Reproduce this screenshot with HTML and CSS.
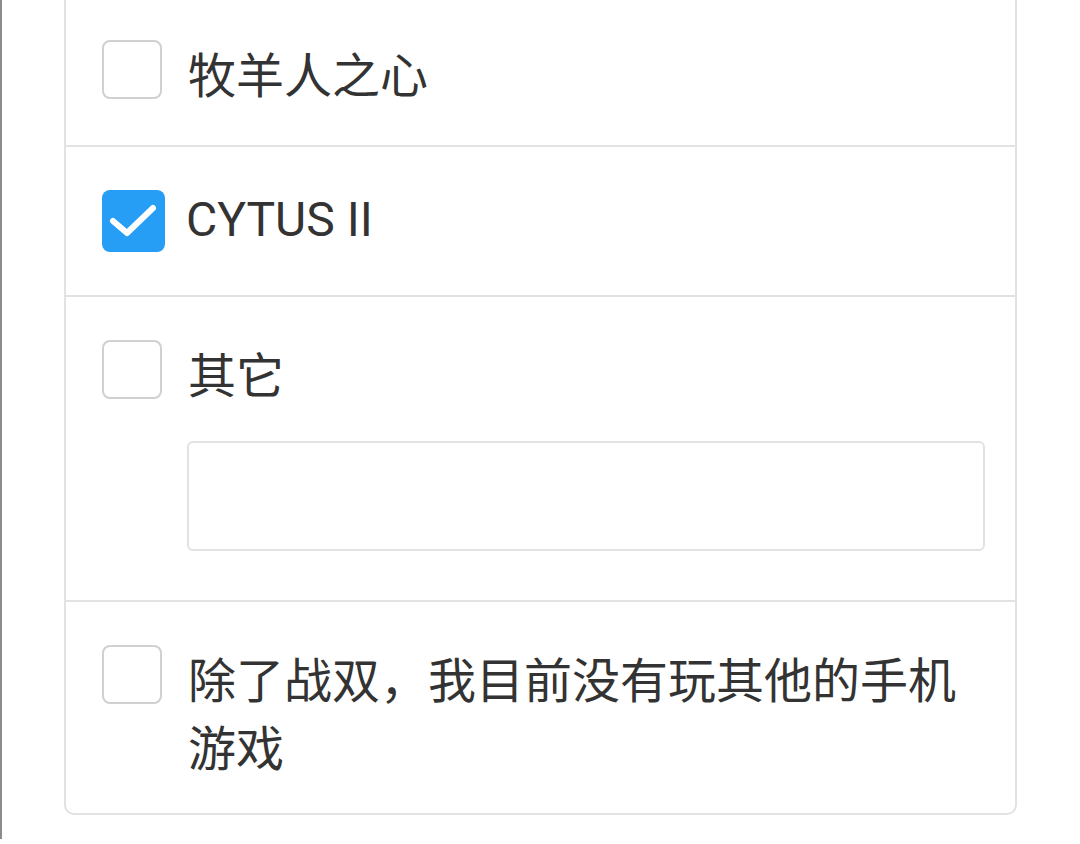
FILE: index.html
```html
<!DOCTYPE html>
<html lang="zh-CN">
<head>
<meta charset="utf-8">
<title>选择</title>
<link rel="stylesheet" href="styles.css">
</head>
<body>
<div class="page">
  <div class="card">
    <label class="row row-single">
      <span class="box-col"><span class="box"></span></span>
      <span class="label-col"><span class="text">牧羊人之心</span></span>
    </label>
    <label class="row row-single">
      <span class="box-col"><span class="box box-checked">
        <svg width="63" height="62" viewBox="0 0 63 62"><path d="M11 31 L25 43 L51 18" fill="none" stroke="#fff" stroke-width="6" stroke-linecap="round" stroke-linejoin="round"/></svg>
      </span></span>
      <span class="label-col"><span class="text text-latin">CYTUS II</span></span>
    </label>
    <div class="row row-other">
      <span class="box-col"><span class="box"></span></span>
      <span class="label-col">
        <span class="text">其它</span>
        <input class="other-input" type="text">
      </span>
    </div>
    <label class="row row-last">
      <span class="box-col"><span class="box"></span></span>
      <span class="label-col"><span class="text">除了战双，我目前没有玩其他的手机游戏</span></span>
    </label>
  </div>
</div>
</body>
</html>
```

FILE: styles.css
```css
html, body {
  margin: 0;
  padding: 0;
  background: #fff;
}
body {
  width: 1080px;
  height: 844px;
  overflow: hidden;
  font-family: Roboto, "Noto Sans CJK SC", sans-serif;
  color: #333;
}
.page {
  border-left: 2px solid #8c8c8c;
  height: 844px;
  box-sizing: border-box;
  padding-left: 62px;
}
.card {
  width: 953px;
  box-sizing: border-box;
  margin-top: -5px;
  border: 2px solid #e2e2e2;
  border-radius: 0 0 10px 10px;
  background: #fff;
}
.row {
  display: flex;
  align-items: flex-start;
  padding: 43px 31px 29px 36px;
  border-bottom: 2px solid #e2e2e2;
}
.row-last {
  border-bottom: none;
  padding-bottom: 29px;
}
.row-single {
  padding-bottom: 34px;
}
.row-other {
  padding-bottom: 49px;
}
.box-col {
  flex: 0 0 86px;
  display: flex;
}
.box {
  display: block;
  width: 60px;
  height: 59px;
  box-sizing: border-box;
  border: 2px solid #d0d0d0;
  border-radius: 8px;
  background: #fff;
}
.box-checked {
  width: 63px;
  height: 62px;
  border: none;
  background: #279ef5;
}
.box-checked svg {
  display: block;
}
.label-col {
  flex: 1;
  display: flex;
  flex-direction: column;
  padding-top: 3px;
}
.text {
  font-size: 48px;
  line-height: 68px;
  color: #333;
}
.text-latin {
  margin-top: -7px;
  margin-bottom: 7px;
  margin-left: -2px;
}
.other-input {
  display: block;
  margin: 30px 0 0 -1px;
  width: 798px;
  height: 110px;
  box-sizing: border-box;
  border: 2px solid #e2e2e2;
  border-radius: 6px;
  background: #fff;
  outline: none;
  font-size: 40px;
  padding: 0 20px;
}
```
